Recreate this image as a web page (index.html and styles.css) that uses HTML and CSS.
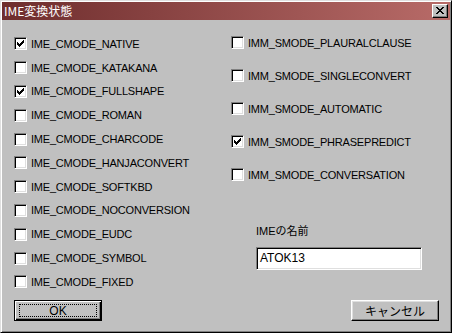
FILE: index.html
```html
<!DOCTYPE html>
<html lang="ja">
<head>
    <meta charset="UTF-8">
    <title>IME変換状態</title>
    <link rel="stylesheet" href="styles.css">
</head>
<body>
    <div class="window">
        <div class="titlebar">
            <span class="title">IME変換状態</span>
            <span class="close">
                <svg width="8" height="7" viewBox="0 0 8 7" shape-rendering="crispEdges"><path d="M0 0h2v1h-2z M6 0h2v1h-2z M1 1h2v1h-2z M5 1h2v1h-2z M2 2h4v1h-4z M3 3h2v1h-2z M2 4h4v1h-4z M1 5h2v1h-2z M5 5h2v1h-2z M0 6h2v1h-2z M6 6h2v1h-2z" fill="#000"/></svg>
            </span>
        </div>
        <div class="content">
            <div class="columns">
                <div class="col col-left">
                    <div class="row"><span class="box checked"></span>IME_CMODE_NATIVE</div>
                    <div class="row"><span class="box"></span>IME_CMODE_KATAKANA</div>
                    <div class="row"><span class="box checked"></span>IME_CMODE_FULLSHAPE</div>
                    <div class="row"><span class="box"></span>IME_CMODE_ROMAN</div>
                    <div class="row"><span class="box"></span>IME_CMODE_CHARCODE</div>
                    <div class="row"><span class="box"></span>IME_CMODE_HANJACONVERT</div>
                    <div class="row"><span class="box"></span>IME_CMODE_SOFTKBD</div>
                    <div class="row"><span class="box"></span>IME_CMODE_NOCONVERSION</div>
                    <div class="row"><span class="box"></span>IME_CMODE_EUDC</div>
                    <div class="row"><span class="box"></span>IME_CMODE_SYMBOL</div>
                    <div class="row"><span class="box"></span>IME_CMODE_FIXED</div>
                </div>
                <div class="col col-right">
                    <div class="row wide"><span class="box"></span>IMM_SMODE_PLAURALCLAUSE</div>
                    <div class="row wide"><span class="box"></span>IMM_SMODE_SINGLECONVERT</div>
                    <div class="row wide"><span class="box"></span>IMM_SMODE_AUTOMATIC</div>
                    <div class="row wide"><span class="box checked"></span>IMM_SMODE_PHRASEPREDICT</div>
                    <div class="row wide"><span class="box"></span>IMM_SMODE_CONVERSATION</div>
                    <div class="name-group">
                        <div class="name-label">IMEの名前</div>
                        <div class="textbox">ATOK13</div>
                    </div>
                </div>
            </div>
            <div class="actions">
                <span class="button default"><span class="focus">OK</span></span>
                <span class="button">キャンセル</span>
            </div>
        </div>
    </div>
</body>
</html>
```

FILE: styles.css
```css
body {
    margin: 0;
    padding: 0;
    background: #c0c0c0;
    font-family: 'Liberation Sans', 'Noto Sans CJK JP', sans-serif;
    font-size: 11px;
    color: #000;
}
.window {
    width: 452px;
    height: 333px;
    box-sizing: border-box;
    padding: 1px;
    background: #c0c0c0;
    border-top: 1px solid #dfdfdf;
    border-left: 1px solid #dfdfdf;
    border-right: 1px solid #000;
    border-bottom: 1px solid #000;
    box-shadow: inset 1px 1px #fff, inset -1px -1px #808080;
    display: flex;
    flex-direction: column;
}
.titlebar {
    height: 18px;
    background: linear-gradient(to right, #6e2d2d, #b86b68);
    display: flex;
    align-items: center;
    justify-content: space-between;
    padding: 0 2px 0 2px;
}
.title {
    color: #fff;
    font-family: 'Noto Sans CJK JP', sans-serif;
    font-size: 12px;
    line-height: 18px;
}
.close {
    width: 16px;
    height: 14px;
    box-sizing: border-box;
    background: #c0c0c0;
    border-top: 1px solid #fff;
    border-left: 1px solid #fff;
    border-right: 1px solid #000;
    border-bottom: 1px solid #000;
    box-shadow: inset -1px -1px #808080;
    display: flex;
    align-items: center;
    justify-content: center;
    padding-bottom: 1px;
}
.content {
    flex: 1;
    display: flex;
    flex-direction: column;
    padding: 0 11px 10px 12px;
}
.columns {
    display: grid;
    grid-template-columns: 217px 1fr;
}
.col-left {
    padding-top: 12px;
}
.col-right {
    padding-top: 6px;
}
.row {
    height: 23.8px;
    display: flex;
    align-items: center;
    letter-spacing: -0.2px;
    white-space: nowrap;
}
.row.wide {
    height: 33px;
}
.box {
    width: 13px;
    height: 13px;
    box-sizing: border-box;
    margin-right: 4px;
    background: #fff;
    border-top: 1px solid #808080;
    border-left: 1px solid #808080;
    border-right: 1px solid #fff;
    border-bottom: 1px solid #fff;
    box-shadow: inset 1px 1px #000, inset -1px -1px #dfdfdf;
    flex: none;
}
.box.checked {
    background: #fff url("data:image/svg+xml,%3Csvg xmlns='http://www.w3.org/2000/svg' width='9' height='9' shape-rendering='crispEdges'%3E%3Cpath transform='translate(1 1)' d='M6 0h1v1h-1z M5 1h2v1h-2z M0 2h1v1h-1z M4 2h3v1h-3z M0 3h2v1h-2z M3 3h3v1h-3z M0 4h5v1h-5z M1 5h3v1h-3z M2 6h1v1h-1z'/%3E%3C/svg%3E") no-repeat 1px 1px;
}
.name-group {
    padding: 33px 0 0 25px;
}
.name-label {
    font-family: 'Liberation Sans', 'Noto Sans CJK JP', sans-serif;
    line-height: 14px;
}
.textbox {
    margin-top: 9px;
    width: 166px;
    height: 23px;
    box-sizing: border-box;
    background: #fff;
    border-top: 1px solid #808080;
    border-left: 1px solid #808080;
    border-right: 1px solid #fff;
    border-bottom: 1px solid #fff;
    box-shadow: inset 1px 1px #000, inset -1px -1px #dfdfdf;
    padding: 3px 3px;
    font-size: 12px;
    line-height: 14px;
}
.actions {
    margin-top: auto;
    display: flex;
    justify-content: space-between;
}
.button {
    width: 88px;
    height: 21px;
    box-sizing: border-box;
    display: flex;
    align-items: center;
    justify-content: center;
    background: #c0c0c0;
    border-top: 1px solid #fff;
    border-left: 1px solid #fff;
    border-right: 1px solid #000;
    border-bottom: 1px solid #000;
    box-shadow: inset -1px -1px #808080, inset 1px 1px #dfdfdf;
    font-size: 12px;
}
.button.default {
    border: 1px solid #000;
    box-shadow: inset 1px 1px #fff, inset -1px -1px #000, inset -2px -2px #808080;
}
.focus {
    width: 78px;
    height: 13px;
    box-sizing: border-box;
    border: 1px dotted #000;
    display: flex;
    align-items: center;
    justify-content: center;
}
```
